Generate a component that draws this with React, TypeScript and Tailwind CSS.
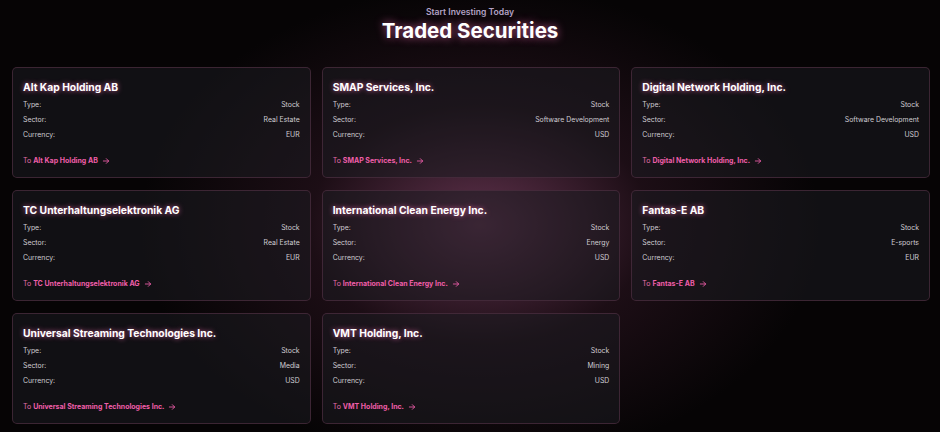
import React from "react";

type Security = {
  name: string;
  type: string;
  sector: string;
  currency: string;
};

const securities: Security[] = [
  { name: "Alt Kap Holding AB", type: "Stock", sector: "Real Estate", currency: "EUR" },
  { name: "SMAP Services, Inc.", type: "Stock", sector: "Software Development", currency: "USD" },
  { name: "Digital Network Holding, Inc.", type: "Stock", sector: "Software Development", currency: "USD" },
  { name: "TC Unterhaltungselektronik AG", type: "Stock", sector: "Real Estate", currency: "EUR" },
  { name: "International Clean Energy Inc.", type: "Stock", sector: "Energy", currency: "USD" },
  { name: "Fantas-E AB", type: "Stock", sector: "E-sports", currency: "EUR" },
  { name: "Universal Streaming Technologies Inc.", type: "Stock", sector: "Media", currency: "USD" },
  { name: "VMT Holding, Inc.", type: "Stock", sector: "Mining", currency: "USD" },
];

function Row({ label, value }: { label: string; value: string }) {
  return (
    <div className="flex justify-between h-[15px] items-center text-[6.9px] text-[#cfccd2]">
      <span>{label}</span>
      <span>{value}</span>
    </div>
  );
}

function Card({ s }: { s: Security }) {
  return (
    <div className="rounded-[5px] border border-[#4e2f41]/70 bg-[#1c1b20]/55 px-[10px] pt-[10px] pb-[10px]">
      <h3 className="text-[10.3px] leading-[18px] font-bold text-white [text-shadow:0_0_5px_rgba(244,114,182,0.8)]">
        {s.name}
      </h3>
      <div className="mt-[1.5px]">
        <Row label="Type:" value={s.type} />
        <Row label="Sector:" value={s.sector} />
        <Row label="Currency:" value={s.currency} />
      </div>
      <a href="#" className="mt-[12.5px] flex items-center gap-[4px] h-[12px] text-[7px] text-[#e46fab]">
        <span>
          To <span className="font-bold text-[#ef5ea9]">{s.name}</span>
        </span>
        <svg width="8" height="8" viewBox="0 0 24 24" fill="none" stroke="currentColor" strokeWidth="2.6" strokeLinecap="round" strokeLinejoin="round" className="text-[#ef5ea9]">
          <path d="M4 12h16" />
          <path d="M13 5l7 7-7 7" />
        </svg>
      </a>
    </div>
  );
}

export default function App() {
  return (
    <div
      className="min-h-[432px] w-full bg-[#060405] bg-[radial-gradient(ellipse_340px_240px_at_480px_225px,rgba(125,65,100,0.75),rgba(70,32,52,0.35)_50%,rgba(6,4,5,0)_100%)] pb-[10px]"
      style={{ fontFamily: "Inter, 'Noto Sans', sans-serif" }}
    >
      <div className="flex flex-col items-center pt-[6px]">
        <p className="text-[8.6px] leading-[12px] font-semibold text-[#b3a2c6]">Start Investing Today</p>
        <h1 className="mt-[1px] text-[20.5px] leading-[24px] font-bold text-white [text-shadow:0_0_8px_rgba(244,114,182,0.75)]">
          Traded Securities
        </h1>
      </div>
      <div className="mt-[24px] grid grid-cols-3 gap-x-[11px] gap-y-[12px] pl-3 pr-[10px]">
        {securities.map((s) => (
          <Card key={s.name} s={s} />
        ))}
      </div>
    </div>
  );
}
